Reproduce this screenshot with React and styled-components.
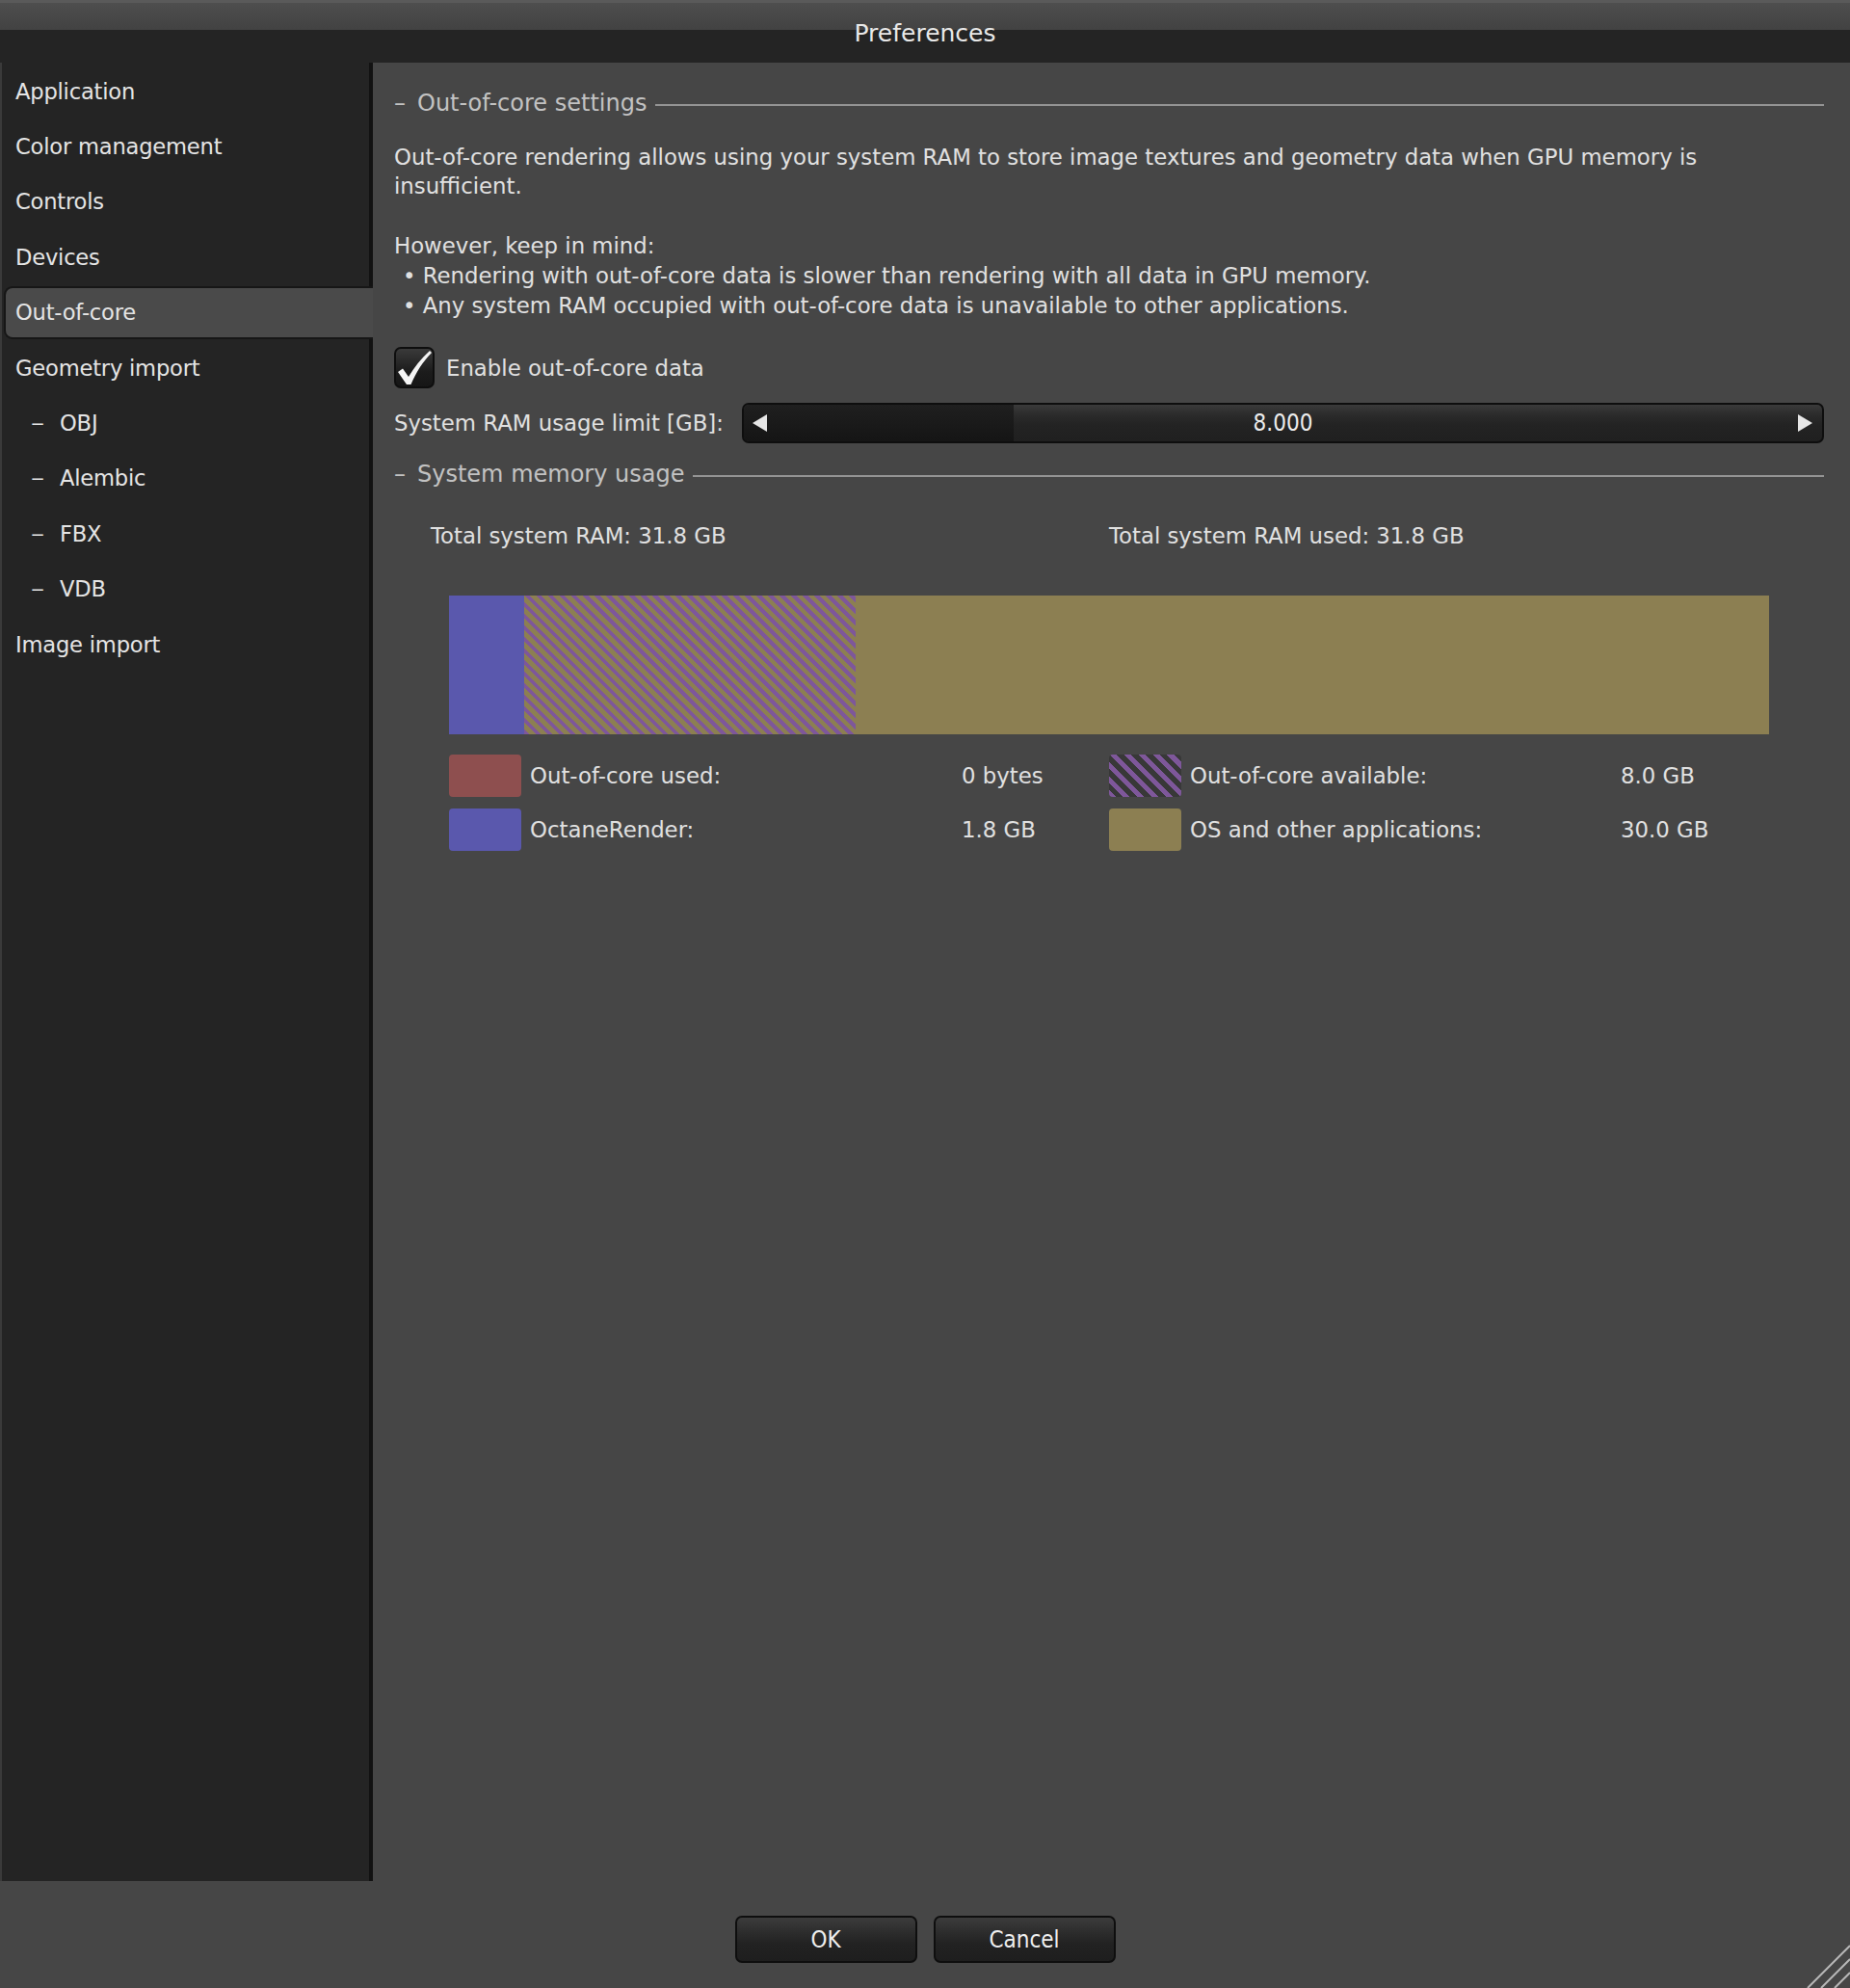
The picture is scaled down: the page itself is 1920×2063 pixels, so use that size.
import React from "react";
import styled, { createGlobalStyle } from "styled-components";

const GlobalStyle = createGlobalStyle`
  html, body { margin: 0; padding: 0; background: #464646; }
  body { font-family: "DejaVu Sans", "Liberation Sans", sans-serif; color: #e2e2e2; }
  * { box-sizing: border-box; }
`;

const Window = styled.div`
  width: 1920px;
  height: 2063px;
  display: flex;
  flex-direction: column;
  background: #464646;
  position: relative;
  overflow: hidden;
`;

const TitleBar = styled.div`
  height: 65px;
  flex-shrink: 0;
  display: flex;
  align-items: center;
  justify-content: center;
  border-top: 3px solid #5a5a5a;
  background: linear-gradient(
    to bottom,
    #4e4e4e 0px,
    #424242 28px,
    #242424 28px,
    #242424 100%
  );
  font-size: 25px;
  color: #e8e8e8;
`;

const Main = styled.div`
  height: 1887px;
  flex-shrink: 0;
  display: flex;
`;

const Sidebar = styled.nav`
  width: 387px;
  flex-shrink: 0;
  background: #242424;
  border-left: 2px solid #3a3a3a;
  border-right: 4px solid #121212;
  padding-top: 1px;
  display: flex;
  flex-direction: column;
`;

const NavItem = styled.div`
  height: 57.4px;
  display: flex;
  align-items: center;
  font-size: 22.6px;
  letter-spacing: -0.2px;
  color: #e4e4e4;
  padding-left: ${(p) => (p.$sub ? 28 : 12)}px;
  margin-right: -4px;
  margin-left: ${(p) => (p.$active ? 2 : 0)}px;
  border-radius: ${(p) => (p.$active ? "9px 0 0 9px" : "0")};
  background: ${(p) => (p.$active ? "#4a4a4a" : "transparent")};
  border: ${(p) => (p.$active ? "2px solid #161616" : "2px solid transparent")};
  border-right: none;
  position: relative;
  z-index: 1;
  ${(p) => (p.$active ? "height: 55px; margin-top: 1.2px; margin-bottom: 1.2px; padding-left: 10px;" : "")}
`;

const Dash = styled.span`
  display: inline-block;
  width: 30px;
  transform: scaleX(1.25);
  transform-origin: left center;
`;

const Content = styled.section`
  flex: 1;
  background: #464646;
  padding: 0 27px 0 22px;
  display: flex;
  flex-direction: column;
  font-size: 22.8px;
  color: #e0e0e0;
`;

const GroupHeader = styled.div`
  display: flex;
  align-items: center;
  height: 30px;
  margin-top: ${(p) => p.$mt}px;
  color: #c2c2c2;
  font-size: 24px;
  white-space: nowrap;
`;

const HeaderDash = styled.span`
  display: inline-block;
  width: 24px;
`;

const HeaderLine = styled.div`
  flex: 1;
  height: 2px;
  background: #949494;
  margin-left: 9px;
  margin-top: 3px;
`;

const Paragraph = styled.div`
  margin-top: ${(p) => p.$mt}px;
  line-height: ${(p) => p.$lh || 30}px;
  padding-right: 60px;
`;

const Bullet = styled.div`
  padding-left: 9px;
`;

const CheckRow = styled.label`
  display: flex;
  align-items: center;
  height: 43px;
  margin-top: 27px;
  gap: 12px;
`;

const CheckBox = styled.div`
  width: 42px;
  height: 43px;
  border-radius: 7px;
  border: 2px solid #0e0e0e;
  background: linear-gradient(to bottom, #3a3a3a, #1c1c1c 60%, #161616);
  display: flex;
  align-items: center;
  justify-content: center;
`;

const SliderRow = styled.div`
  display: flex;
  align-items: center;
  height: 42px;
  margin-top: 15px;
`;

const SliderLabel = styled.div`
  width: 361px;
  flex-shrink: 0;
`;

const SliderTrack = styled.div`
  flex: 1;
  height: 42px;
  border: 2px solid #0e0e0e;
  border-radius: 7px;
  background: linear-gradient(to bottom, #3a3a3a 0%, #2a2a2a 30%, #232323 55%, #202020 100%);
  position: relative;
  display: flex;
  align-items: center;
  justify-content: center;
  overflow: hidden;
`;

const SliderFill = styled.div`
  position: absolute;
  left: 0;
  top: 0;
  bottom: 0;
  background: linear-gradient(to bottom, #1f1f1f, #151515);
`;

const SliderValue = styled.span`
  position: relative;
  font-family: "DejaVu Sans Condensed", "DejaVu Sans", sans-serif;
  font-stretch: condensed;
  font-size: 24px;
  color: #ececec;
`;

const Arrow = styled.svg`
  position: absolute;
  top: 50%;
  transform: translateY(-50%);
  ${(p) => (p.$side === "left" ? "left: 9px;" : "right: 10px;")}
`;

const TotalsRow = styled.div`
  display: grid;
  grid-template-columns: 704px auto;
  margin-top: 34px;
  margin-left: 38px;
  height: 30px;
  align-items: center;
`;

const UsageBar = styled.div`
  margin-top: 47px;
  margin-left: 57px;
  width: 1370px;
  height: 144px;
  display: flex;
  background: #8c7f52;
`;

const Segment = styled.div`
  height: 100%;
  flex-shrink: 0;
  background: ${(p) => p.$bg};
`;

const hatchBar = "repeating-linear-gradient(45deg, #7e579a 0px, #7e579a 4px, #8c7f52 4px, #8c7f52 8.5px)";
const hatchSwatch = "repeating-linear-gradient(45deg, #7e579a 0px, #7e579a 5px, #383838 5px, #383838 10.5px)";

const Legend = styled.div`
  margin-top: 21px;
  margin-left: 57px;
  display: grid;
  grid-template-columns: 75px 457px 153px 75px 456px auto;
  row-gap: 12px;
  align-items: center;
`;

const Swatch = styled.div`
  width: 75px;
  height: 44px;
  border-radius: 4px;
  background: ${(p) => p.$bg};
`;

const LegendLabel = styled.div`
  padding-left: 9px;
`;

const LegendValue = styled.div``;

const Footer = styled.div`
  flex: 1;
  display: flex;
  justify-content: center;
  align-items: flex-start;
  padding-top: 36px;
  gap: 17px;
  position: relative;
`;

const Button = styled.button`
  width: 189px;
  height: 49px;
  border: 2px solid #0e0e0e;
  border-radius: 7px;
  background: linear-gradient(to bottom, #3c3c3c 0%, #2c2c2c 35%, #222 60%, #1e1e1e 100%);
  color: #eeeeee;
  font-family: "DejaVu Sans Condensed", "DejaVu Sans", sans-serif;
  font-stretch: condensed;
  font-size: 24px;
  cursor: pointer;
`;

const Grip = styled.svg`
  position: absolute;
  right: 0;
  bottom: 0;
`;

const navItems = [
  { label: "Application" },
  { label: "Color management" },
  { label: "Controls" },
  { label: "Devices" },
  { label: "Out-of-core", active: true },
  { label: "Geometry import" },
  { label: "OBJ", sub: true },
  { label: "Alembic", sub: true },
  { label: "FBX", sub: true },
  { label: "VDB", sub: true },
  { label: "Image import" },
];

const legend = [
  [
    { bg: "#8e4f4f", label: "Out-of-core used:", value: "0 bytes" },
    { bg: hatchSwatch, label: "Out-of-core available:", value: "8.0 GB" },
  ],
  [
    { bg: "#5a58ad", label: "OctaneRender:", value: "1.8 GB" },
    { bg: "#8c7f52", label: "OS and other applications:", value: "30.0 GB" },
  ],
];

export default function App() {
  const limit = 8;
  const max = 32;
  const total = 31.8;
  const octane = 1.8;
  return (
    <>
      <GlobalStyle />
      <Window>
        <TitleBar>Preferences</TitleBar>
        <Main>
          <Sidebar>
            {navItems.map((it) => (
              <NavItem key={it.label} $sub={it.sub} $active={it.active}>
                {it.sub && <Dash>–</Dash>}
                {it.label}
              </NavItem>
            ))}
          </Sidebar>
          <Content>
            <GroupHeader $mt={27}>
              <HeaderDash>–</HeaderDash>Out-of-core settings
              <HeaderLine />
            </GroupHeader>
            <Paragraph $mt={26}>
              Out-of-core rendering allows using your system RAM to store image textures and geometry data when GPU memory is insufficient.
            </Paragraph>
            <Paragraph $mt={32} $lh={31}>
              <div>However, keep in mind:</div>
              <Bullet>• Rendering with out-of-core data is slower than rendering with all data in GPU memory.</Bullet>
              <Bullet>• Any system RAM occupied with out-of-core data is unavailable to other applications.</Bullet>
            </Paragraph>
            <CheckRow>
              <CheckBox>
                <svg width="38" height="39" viewBox="0 0 38 39">
                  <path
                    d="M2 24 L7 20.5 L13 29 C19 19 26 10 35 2 L37 4 C28 13 21 24 15.5 37 L11 37 Z"
                    fill="#f4f4f4"
                  />
                </svg>
              </CheckBox>
              Enable out-of-core data
            </CheckRow>
            <SliderRow>
              <SliderLabel>System RAM usage limit [GB]:</SliderLabel>
              <SliderTrack>
                <SliderFill style={{ width: `${(limit / max) * 100}%` }} />
                <Arrow $side="left" width="15" height="18" viewBox="0 0 15 18">
                  <polygon points="15,0 15,18 0,9" fill="#e6e6e6" />
                </Arrow>
                <SliderValue>8.000</SliderValue>
                <Arrow $side="right" width="15" height="18" viewBox="0 0 15 18">
                  <polygon points="0,0 0,18 15,9" fill="#e6e6e6" />
                </Arrow>
              </SliderTrack>
            </SliderRow>
            <GroupHeader $mt={17}>
              <HeaderDash>–</HeaderDash>System memory usage
              <HeaderLine />
            </GroupHeader>
            <TotalsRow>
              <div>Total system RAM: 31.8 GB</div>
              <div>Total system RAM used: 31.8 GB</div>
            </TotalsRow>
            <UsageBar>
              <Segment $bg="#5a58ad" style={{ width: `${(octane / total) * 100}%` }} />
              <Segment $bg={hatchBar} style={{ width: `${(limit / total) * 100}%` }} />
            </UsageBar>
            <Legend>
              {legend.map((row, ri) =>
                row.map((c, ci) => (
                  <React.Fragment key={`${ri}-${ci}`}>
                    <Swatch $bg={c.bg} />
                    <LegendLabel>{c.label}</LegendLabel>
                    <LegendValue>{c.value}</LegendValue>
                  </React.Fragment>
                ))
              )}
            </Legend>
          </Content>
        </Main>
        <Footer>
          <Button>OK</Button>
          <Button>Cancel</Button>
          <Grip width="46" height="46" viewBox="0 0 46 46">
            <g stroke="#b8b8b8" strokeWidth="2">
              <line x1="2" y1="46" x2="46" y2="2" />
              <line x1="16" y1="46" x2="46" y2="16" />
              <line x1="30" y1="46" x2="46" y2="30" />
            </g>
          </Grip>
        </Footer>
      </Window>
    </>
  );
}
